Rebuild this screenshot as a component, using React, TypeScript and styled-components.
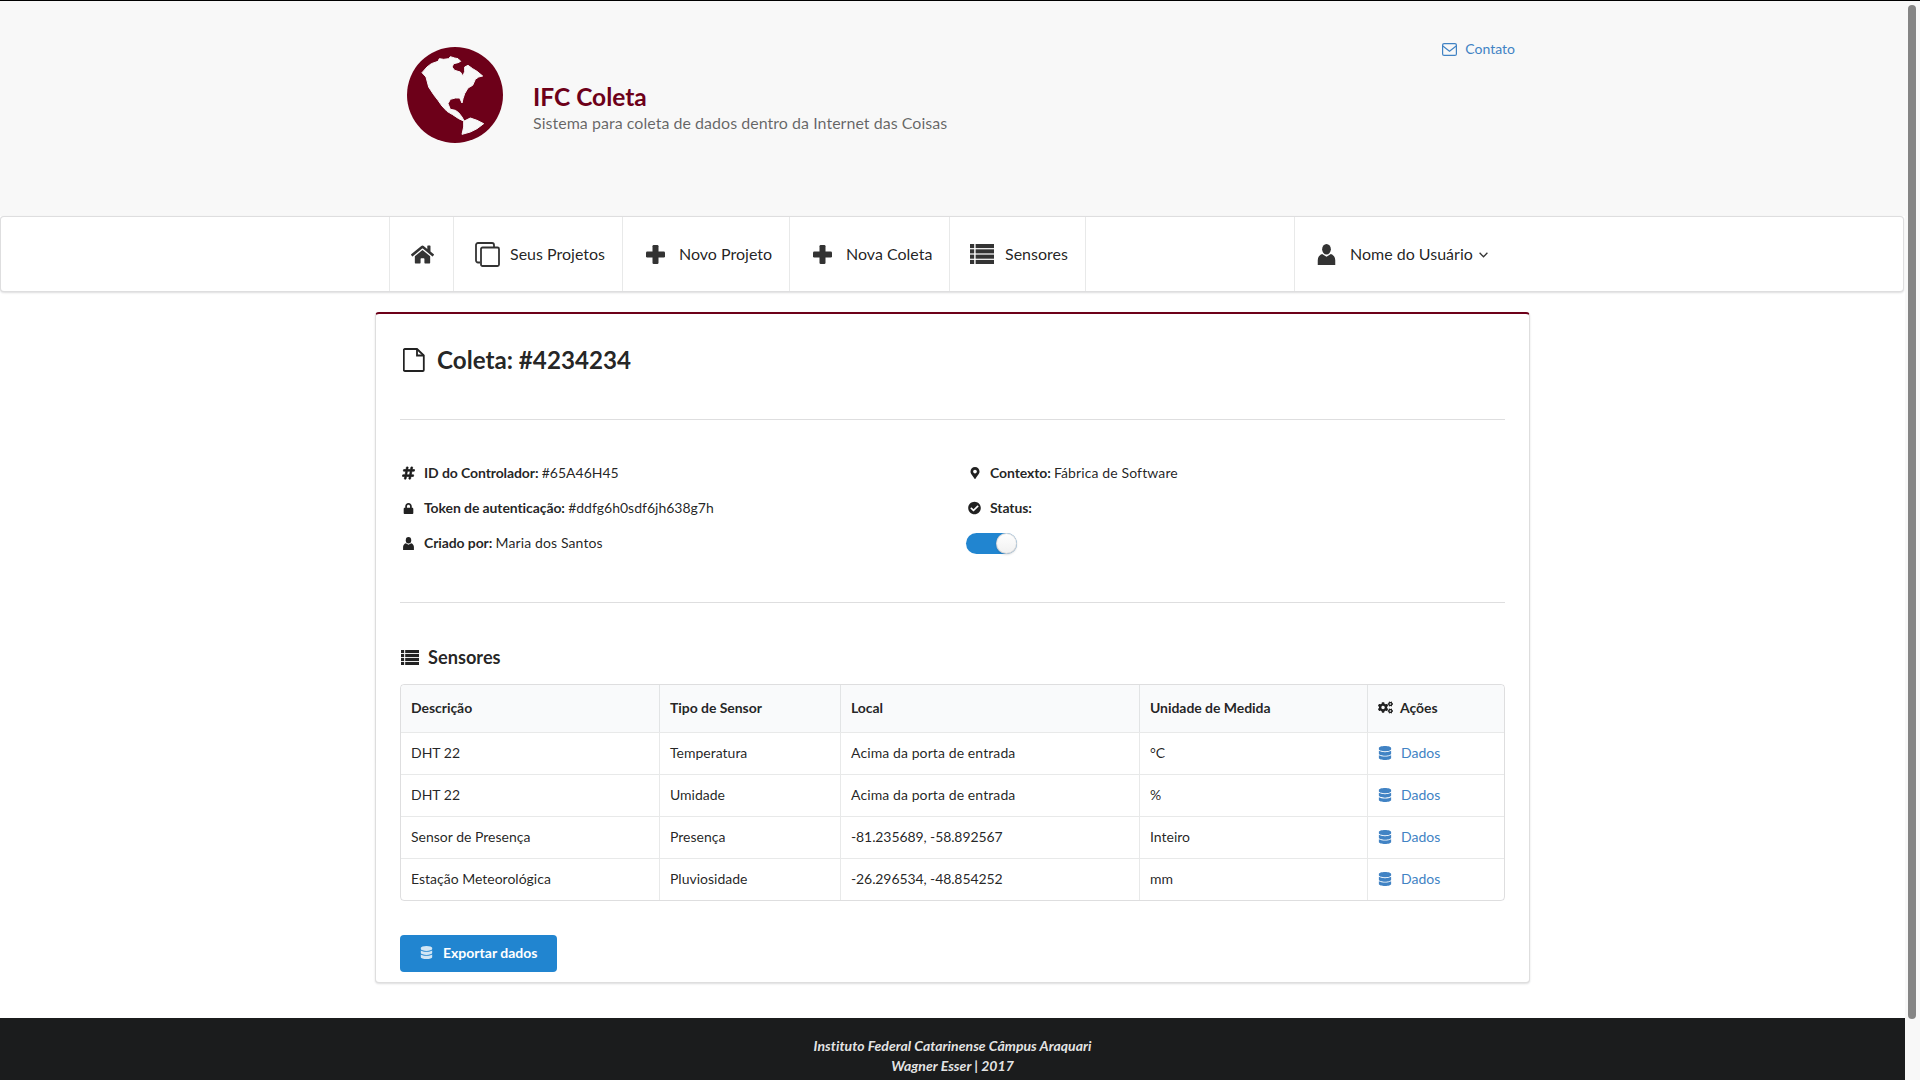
import React from 'react';
import styled, { createGlobalStyle } from 'styled-components';
import {
  FaCheckCircle,
  FaCogs,
  FaDatabase,
  FaHashtag,
  FaHome,
  FaLock,
  FaMapMarkerAlt,
} from 'react-icons/fa';

const GlobalStyle = createGlobalStyle`
  html, body {
    margin: 0;
    padding: 0;
    height: 100%;
    overflow: hidden;
    background: #000;
  }
  body {
    font-family: Lato, "Helvetica Neue", Arial, sans-serif;
    font-size: 14px;
    line-height: 20px;
    color: rgba(0, 0, 0, 0.87);
  }
  * {
    box-sizing: border-box;
  }
`;

const Window = styled.div`
  display: flex;
  margin-top: 1px;
  height: 1079px;
  overflow: hidden;
  background: #fff;
`;

const Content = styled.div`
  flex: none;
  width: 1905px;
`;

const ScrollTrack = styled.div`
  flex: none;
  width: 15px;
  padding: 4px 4px 0 3px;
  background: #f8f8f8;
`;

const ScrollThumb = styled.div`
  width: 8px;
  height: 1014px;
  border-radius: 4px;
  background: #858585;
`;

const Container = styled.div`
  width: 1127px;
  margin: 0 auto;
`;

const Masthead = styled.header`
  height: 215px;
  background: #f8f8f8;
`;

const MastheadInner = styled(Container)`
  display: flex;
  justify-content: space-between;
  align-items: flex-start;
  padding: 46px 1px 0 18px;
`;

const Brand = styled.div`
  display: flex;
  gap: 30px;
`;

const BrandText = styled.div`
  padding-top: 34px;
`;

const BrandTitle = styled.h1`
  margin: 0 0 1px;
  font-size: 24.5px;
  line-height: 31px;
  font-weight: 700;
  color: #6d0019;
`;

const BrandSub = styled.div`
  font-size: 16px;
  line-height: 20px;
  letter-spacing: 0.03px;
  color: rgba(0, 0, 0, 0.6);
`;

const ContactLink = styled.a`
  display: flex;
  align-items: center;
  gap: 8px;
  margin-top: -8px;
  color: #4183c4;
  font-size: 14px;
  svg {
    width: 15px;
    height: 13px;
  }
`;

const NavBar = styled.nav`
  height: 76px;
  margin-right: 1px;
  background: #fff;
  border: 1px solid rgba(34, 36, 38, 0.15);
  border-radius: 4px;
  box-shadow: 0 1px 2px 0 rgba(34, 36, 38, 0.15);
`;

const NavInner = styled(Container)`
  display: flex;
  height: 100%;
  margin-left: 388px;
  border-left: 1px solid rgba(34, 36, 38, 0.1);
`;

const NavItem = styled.a<{ $width: number; $pad?: number; $last?: boolean; $right?: boolean; $gap?: number }>`
  display: flex;
  align-items: center;
  gap: ${(p) => p.$gap ?? 13}px;
  flex: none;
  width: ${(p) => p.$width}px;
  padding-left: ${(p) => p.$pad ?? 21}px;
  margin-left: ${(p) => (p.$right ? 'auto' : '0')};
  border-right: ${(p) => (p.$last ? 'none' : '1px solid rgba(34, 36, 38, 0.1)')};
  border-left: ${(p) => (p.$right ? '1px solid rgba(34, 36, 38, 0.1)' : 'none')};
  font-size: 16px;
  color: rgba(0, 0, 0, 0.87);
  svg {
    flex: none;
    color: #333;
  }
`;

const Caret = styled.svg`
  margin: 2px 0 0 -7px;
`;

const Page = styled(Container)`
  width: 1155px;
  margin-top: 20px;
`;

const Card = styled.section`
  height: 671px;
  padding: 0 24px;
  background: #fff;
  border: 1px solid rgba(34, 36, 38, 0.15);
  border-top: 2px solid #6d0019;
  border-radius: 4px;
  box-shadow: 0 1px 2px 0 rgba(34, 36, 38, 0.15);
`;

const CardTitle = styled.h2`
  display: flex;
  align-items: center;
  gap: 12px;
  height: 106px;
  margin: 0;
  padding: 0 0 13px 3px;
  font-size: 24.2px;
  line-height: 30px;
  font-weight: 700;
  color: rgba(0, 0, 0, 0.87);
  border-bottom: 1px solid rgba(34, 36, 38, 0.15);
`;

const InfoGrid = styled.div`
  display: grid;
  grid-template-columns: 566px 1fr;
  height: 183px;
  padding-top: 43px;
  border-bottom: 1px solid rgba(34, 36, 38, 0.15);
`;

const InfoColumn = styled.div`
  display: flex;
  flex-direction: column;
  gap: 15px;
`;

const InfoRow = styled.div`
  display: flex;
  align-items: center;
  height: 20px;
  padding-left: 2px;
  white-space: pre;
  b {
    font-weight: 700;
    letter-spacing: -0.1px;
  }
`;

const InfoValue = styled.span`
  letter-spacing: 0.12px;
`;

const InfoIcon = styled.span`
  display: flex;
  justify-content: center;
  flex: none;
  width: 13px;
  margin-right: 9px;
  color: rgba(0, 0, 0, 0.87);
`;

const HashIcon = styled(FaHashtag)`
  stroke: currentColor;
  stroke-width: 24px;
`;

const Toggle = styled.div`
  position: relative;
  width: 51px;
  height: 21px;
  background: #2185d0;
  border-radius: 11px;
`;

const ToggleKnob = styled.span`
  position: absolute;
  top: 0;
  right: 0;
  width: 21px;
  height: 21px;
  border-radius: 50%;
  background: linear-gradient(#fff, #f0f0f0);
  box-shadow: 0 1px 2px 0 rgba(34, 36, 38, 0.15), 0 0 0 1px rgba(34, 36, 38, 0.15) inset;
`;

const SectionTitle = styled.h3`
  display: flex;
  align-items: center;
  gap: 9px;
  height: 26px;
  margin: 41px 0 14px;
  padding-left: 1px;
  font-size: 18.2px;
  line-height: 26px;
  font-weight: 700;
`;

const SensorTable = styled.table`
  width: 1105px;
  table-layout: fixed;
  border-collapse: separate;
  border-spacing: 0;
  border: 1px solid rgba(34, 36, 38, 0.15);
  border-radius: 4px;
  font-size: 14px;
`;

const Th = styled.th`
  height: 47px;
  padding: 0 10px 2px;
  text-align: left;
  font-weight: 700;
  letter-spacing: -0.05px;
  background: #f9fafb;
  border-left: 1px solid rgba(34, 36, 38, 0.1);
  &:first-child {
    border-left: none;
    border-top-left-radius: 4px;
  }
  &:last-child {
    border-top-right-radius: 4px;
  }
`;

const Td = styled.td<{ $spacing?: number }>`
  height: 42px;
  padding: 0 10px 2px;
  letter-spacing: ${(p) => p.$spacing ?? 0}px;
  border-top: 1px solid rgba(34, 36, 38, 0.1);
  border-left: 1px solid rgba(34, 36, 38, 0.1);
  &:first-child {
    border-left: none;
  }
`;

const HeadLabel = styled.span`
  display: flex;
  align-items: center;
  gap: 7px;
`;

const DataLink = styled.a`
  display: flex;
  align-items: center;
  gap: 9px;
  color: #4183c4;
`;

const ExportButton = styled.button`
  display: flex;
  align-items: center;
  gap: 10px;
  width: 157px;
  height: 37px;
  margin-top: 34px;
  padding: 0 0 2px 20px;
  border: none;
  border-radius: 4px;
  background: #2185d0;
  color: #fff;
  font-family: inherit;
  font-size: 14px;
  font-weight: 700;
  svg {
    opacity: 0.8;
  }
`;

const Footer = styled.footer`
  height: 122px;
  margin-top: 35px;
  padding-top: 18px;
  background: #1b1c1d;
  color: rgba(255, 255, 255, 0.9);
  font-size: 14px;
  font-weight: 700;
  font-style: italic;
  letter-spacing: 0.04px;
  text-align: center;
`;

const Globe = () => (
  <svg width="96" height="96" viewBox="0 0 288 288">
    <circle cx="144" cy="144" r="144" fill="#6d0019" />
    <g fill="#f8f8f8" stroke="#f8f8f8" strokeWidth="3" strokeLinejoin="round">
      <path d="M45 77 L60 60 L73 50 L93 43 L97 35 L110 37 L125 35 L130 29 L143 33 L153 35 L161 43 L153 47 L140 50 L135 60 L143 70 L160 75 L168 87 L173 73 L173 60 L183 55 L197 65 L210 73 L227 87 L215 90 L205 97 L197 115 L183 123 L173 140 L168 155 L165 168 L158 153 L145 153 L130 157 L123 170 L130 187 L145 190 L155 197 L165 210 L172 223 L155 215 L137 203 L120 193 L105 177 L93 160 L80 143 L65 120 L57 90 Z" />
      <path d="M170 223 L190 213 L210 220 L230 230 L210 245 L190 255 L165 262 L170 240 Z" />
    </g>
  </svg>
);

const EnvelopeIcon = () => (
  <svg viewBox="0 0 15 13" fill="none" stroke="currentColor" strokeWidth="1.2">
    <rect x="0.6" y="0.6" width="13.8" height="11.8" rx="1.5" />
    <path d="M0.8 3 L7.5 8.2 L14.2 3" />
  </svg>
);

const CopyIcon = () => (
  <svg width="25" height="25" viewBox="0 0 25 25" fill="none" stroke="#333" strokeWidth="1.8">
    <path d="M5 20.5 H3 a2 2 0 0 1-2-2 V3 a2 2 0 0 1 2-2 h14 a2 2 0 0 1 2 2 v2" />
    <rect x="6" y="5.5" width="18" height="18.5" rx="1.5" />
  </svg>
);

const FileIcon = () => (
  <svg width="22" height="24" viewBox="0 0 22 24" fill="none" stroke="#222" strokeWidth="1.8">
    <path d="M1.8 1 H14 L20.8 7.5 V22 a1 1 0 0 1-1 1 H1.8 a1 1 0 0 1-1-1 V2 a1 1 0 0 1 1-1 Z" />
    <path d="M14 1 V7.5 H20.8" />
  </svg>
);

const UserIcon = ({ size, color = '#333' }: { size: number; color?: string }) => (
  <svg width={size} height={size} viewBox="0 0 24 24" fill={color}>
    <ellipse cx="12" cy="6" rx="5" ry="6" />
    <path d="M7 11.5 L12 14.5 L17 11.5 C20 12.5 22 15 22 18.5 V24 H2 V18.5 C2 15 4 12.5 7 11.5 Z" />
  </svg>
);

const PlusIcon = () => (
  <svg width="19" height="19" viewBox="0 0 19 19" fill="#333">
    <rect x="6.5" y="0" width="6" height="19" rx="1.2" />
    <rect x="0" y="6.5" width="19" height="6" rx="1.2" />
  </svg>
);

const ListIcon = ({ width, color = '#333' }: { width: number; color?: string }) => (
  <svg width={width} height={(width * 20) / 24} viewBox="0 0 24 20" fill={color}>
    {[0, 5.3, 10.6, 15.9].map((y) => (
      <g key={y}>
        <rect x="0" y={y} width="4.2" height="4.1" />
        <rect x="5.6" y={y} width="18.4" height="4.1" />
      </g>
    ))}
  </svg>
);

const sensors = [
  { name: 'DHT 22', type: 'Temperatura', place: 'Acima da porta de entrada', placeSpacing: 0.1, unit: '°C' },
  { name: 'DHT 22', type: 'Umidade', place: 'Acima da porta de entrada', placeSpacing: 0.1, unit: '%' },
  { name: 'Sensor de Presença', type: 'Presença', place: '-81.235689, -58.892567', placeSpacing: -0.1, unit: 'Inteiro' },
  { name: 'Estação Meteorológica', type: 'Pluviosidade', place: '-26.296534, -48.854252', placeSpacing: -0.1, unit: 'mm' },
];

const colWidths = [258, 181, 299, 228, 137];

export default function App() {
  return (
    <>
      <GlobalStyle />
      <Window>
        <Content>
          <Masthead>
            <MastheadInner>
              <Brand>
                <Globe />
                <BrandText>
                  <BrandTitle>IFC Coleta</BrandTitle>
                  <BrandSub>Sistema para coleta de dados dentro da Internet das Coisas</BrandSub>
                </BrandText>
              </Brand>
              <ContactLink>
                <EnvelopeIcon />
                Contato
              </ContactLink>
            </MastheadInner>
          </Masthead>
          <NavBar>
            <NavInner>
              <NavItem $width={64}>
                <FaHome size={23} />
              </NavItem>
              <NavItem $width={169} $gap={10}>
                <CopyIcon />
                Seus Projetos
              </NavItem>
              <NavItem $width={167} $pad={23} $gap={14}>
                <PlusIcon />
                Novo Projeto
              </NavItem>
              <NavItem $width={160} $pad={23} $gap={14}>
                <PlusIcon />
                Nova Coleta
              </NavItem>
              <NavItem $width={136} $pad={20} $gap={11}>
                <ListIcon width={24} />
                Sensores
              </NavItem>
              <NavItem $width={222} $pad={21} $right $last $gap={13}>
                <UserIcon size={21} />
                Nome do Usuário
                <Caret width="9" height="6" viewBox="0 0 9 6" fill="none" stroke="#333" strokeWidth="1.3">
                  <path d="M0.6 0.8 L4.5 4.8 L8.4 0.8" />
                </Caret>
              </NavItem>
            </NavInner>
          </NavBar>
          <Page>
            <Card>
              <CardTitle>
                <FileIcon />
                Coleta: #4234234
              </CardTitle>
              <InfoGrid>
                <InfoColumn>
                  <InfoRow>
                    <InfoIcon>
                      <HashIcon size={14} />
                    </InfoIcon>
                    <b>ID do Controlador: </b>#65A46H45
                  </InfoRow>
                  <InfoRow>
                    <InfoIcon>
                      <FaLock size={11} />
                    </InfoIcon>
                    <b>Token de autenticação: </b>#ddfg6h0sdf6jh638g7h
                  </InfoRow>
                  <InfoRow>
                    <InfoIcon>
                      <UserIcon size={13} color="#222" />
                    </InfoIcon>
                    <b>Criado por: </b>
                    <InfoValue>Maria dos Santos</InfoValue>
                  </InfoRow>
                </InfoColumn>
                <InfoColumn>
                  <InfoRow>
                    <InfoIcon>
                      <FaMapMarkerAlt size={12} />
                    </InfoIcon>
                    <b>Contexto: </b>
                    <InfoValue>Fábrica de Software</InfoValue>
                  </InfoRow>
                  <InfoRow>
                    <InfoIcon>
                      <FaCheckCircle size={14} />
                    </InfoIcon>
                    <b>Status:</b>
                  </InfoRow>
                  <Toggle>
                    <ToggleKnob />
                  </Toggle>
                </InfoColumn>
              </InfoGrid>
              <SectionTitle>
                <ListIcon width={18} color="#222" />
                Sensores
              </SectionTitle>
              <SensorTable>
                <colgroup>
                  {colWidths.map((w) => (
                    <col key={w} width={w} />
                  ))}
                </colgroup>
                <thead>
                  <tr>
                    <Th>Descrição</Th>
                    <Th>Tipo de Sensor</Th>
                    <Th>Local</Th>
                    <Th>Unidade de Medida</Th>
                    <Th>
                      <HeadLabel>
                        <FaCogs size={15} />
                        Ações
                      </HeadLabel>
                    </Th>
                  </tr>
                </thead>
                <tbody>
                  {sensors.map((s) => (
                    <tr key={s.type}>
                      <Td>{s.name}</Td>
                      <Td>{s.type}</Td>
                      <Td $spacing={s.placeSpacing}>{s.place}</Td>
                      <Td>{s.unit}</Td>
                      <Td>
                        <DataLink>
                          <FaDatabase size={14} />
                          Dados
                        </DataLink>
                      </Td>
                    </tr>
                  ))}
                </tbody>
              </SensorTable>
              <ExportButton>
                <FaDatabase size={13} />
                Exportar dados
              </ExportButton>
            </Card>
          </Page>
          <Footer>
            Instituto Federal Catarinense Câmpus Araquari
            <br />
            Wagner Esser | 2017
          </Footer>
        </Content>
        <ScrollTrack>
          <ScrollThumb />
        </ScrollTrack>
      </Window>
    </>
  );
}
